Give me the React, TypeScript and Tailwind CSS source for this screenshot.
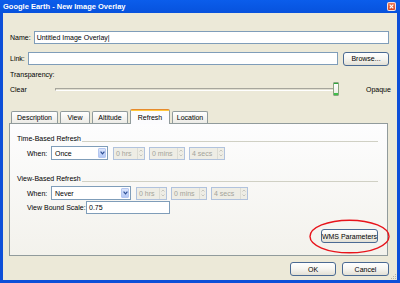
import React from "react";

function XpButton({ label, className = "" }: { label: string; className?: string }) {
  return (
    <div
      className={`flex h-[14px] items-center justify-center whitespace-nowrap rounded-[3px] border border-[#4a6a93] bg-gradient-to-b from-white via-[#f6f5f0] to-[#e2e0d5] text-[7px] leading-none text-black ${className}`}
    >
      {label}
    </div>
  );
}

function TextBox({ value = "", className = "" }: { value?: string; className?: string }) {
  return (
    <div className={`flex h-[13px] items-center whitespace-nowrap border border-[#7f9db9] bg-white px-[2px] text-[7px] leading-none ${className}`}>
      {value}
    </div>
  );
}

function Select({ value, className = "" }: { value: string; className?: string }) {
  return (
    <div className={`flex h-[14px] items-stretch border border-[#7f9db9] bg-white p-px ${className}`}>
      <span className="flex flex-1 items-center pl-[2px] text-[7px] leading-none">{value}</span>
      <span className="flex w-[8px] items-center justify-center rounded-[1px] border border-[#b5c7f0] bg-gradient-to-b from-[#dbe5fc] to-[#b3c8f5]">
        <svg width="5" height="4" viewBox="0 0 5 4">
          <path d="M0.6 0.7 L2.5 2.8 L4.4 0.7" stroke="#2b4d94" strokeWidth="1.2" fill="none" />
        </svg>
      </span>
    </div>
  );
}

function Spin({ value, className = "" }: { value: string; className?: string }) {
  return (
    <div className={`flex h-[13px] items-stretch border border-[#b0c2dd] bg-[#eeede5] ${className}`}>
      <span className="flex flex-1 items-center whitespace-nowrap pl-[2px] text-[7px] leading-none text-[#a3a39a]">{value}</span>
      <span className="flex w-[7px] flex-col items-center justify-center gap-[2px] border-l border-[#dcdcd4]">
        <svg width="4" height="3" viewBox="0 0 4 3">
          <path d="M0.5 2.5 L2 1 L3.5 2.5" stroke="#c2c2ba" strokeWidth="0.9" fill="none" />
        </svg>
        <svg width="4" height="3" viewBox="0 0 4 3">
          <path d="M0.5 0.5 L2 2 L3.5 0.5" stroke="#c2c2ba" strokeWidth="0.9" fill="none" />
        </svg>
      </span>
    </div>
  );
}

function GroupTitle({ title }: { title: string }) {
  return (
    <div className="flex h-[9px] items-end pr-[9px]">
      <span className="whitespace-nowrap text-[7px] leading-[9px]">{title}</span>
      <span className="mb-[1px] ml-px h-px flex-1 bg-[#d0d0c4]" />
    </div>
  );
}

function Tab({ label, active = false, className = "" }: { label: string; active?: boolean; className?: string }) {
  if (active) {
    return (
      <div className={`relative z-10 -mb-px flex h-[15px] items-center justify-center rounded-t-[2px] border border-b-0 border-[#919b9c] border-t-[#e68b2c] bg-[#fcfcfe] text-[7px] leading-none ${className}`}>
        <span className="absolute left-0 right-0 top-0 h-px bg-[#ffc73c]" />
        {label}
      </div>
    );
  }
  return (
    <div className={`flex h-[12px] items-center justify-center rounded-t-[2px] border border-b-0 border-[#919b9c] bg-gradient-to-b from-white to-[#ecebe6] text-[7px] leading-none ${className}`}>
      {label}
    </div>
  );
}

export default function App() {
  return (
    <div className="flex h-[283px] w-[400px] flex-col bg-[#0d4fd8] font-['Liberation_Sans',Arial,sans-serif] text-black">
      {/* title bar */}
      <div className="flex h-[13px] items-center justify-between bg-gradient-to-b from-[#0b5deb] to-[#0752dd] pl-[3px] pr-[4px]">
        <span className="text-[7.5px] font-bold leading-none text-white">Google Earth - New Image Overlay</span>
        <div className="flex h-[9px] w-[9px] items-center justify-center rounded-[2px] border border-white/80 bg-gradient-to-b from-[#ea7a5a] to-[#d5411c]">
          <svg width="5" height="5" viewBox="0 0 5 5">
            <path d="M0.7 0.7 L4.3 4.3 M4.3 0.7 L0.7 4.3" stroke="white" strokeWidth="1.2" />
          </svg>
        </div>
      </div>

      {/* body */}
      <div className="relative mx-[3px] mb-[3px] flex flex-1 flex-col bg-[#ece9d8] pl-[7px] pr-[8px] pt-[18px] text-[7px] leading-none">
        <div className="flex h-[13px] items-center gap-[3px]">
          <span>Name:</span>
          <TextBox value="Untitled Image Overlay|" className="flex-1" />
        </div>

        <div className="mt-[8px] flex h-[13px] items-center">
          <span>Link:</span>
          <TextBox className="ml-[3px] flex-1" />
          <XpButton label="Browse..." className="ml-[5px] w-[46px]" />
        </div>

        <div className="mt-[5px] leading-[9px]">Transparency:</div>

        <div className="mt-[3px] flex h-[14px] items-center">
          <span className="w-[45px]">Clear</span>
          <div className="relative flex h-[14px] flex-1 items-center">
            <div className="h-[3px] w-full border border-[#a7a69c] border-b-white border-r-white bg-[#e2e0d2]" />
            <div className="absolute right-0 top-0 h-[14px] w-[6px] rounded-[1px] border border-[#8aa580] bg-gradient-to-b from-white to-[#ecebe4]">
              <span className="absolute bottom-0 left-0 right-0 h-[2px] bg-[#3fbf4a]" />
              <span className="absolute left-0 right-0 top-0 h-px bg-[#2ea93c]" />
            </div>
          </div>
          <span className="ml-[27px] w-[23px]">Opaque</span>
        </div>

        {/* tabs */}
        <div className="ml-[1px] mt-[13px] flex items-end gap-[2px]">
          <Tab label="Description" className="w-[47px]" />
          <Tab label="View" className="w-[30px]" />
          <Tab label="Altitude" className="w-[36px]" />
          <Tab label="Refresh" active className="w-[40px]" />
          <Tab label="Location" className="w-[36px]" />
        </div>

        <div className="-ml-px mr-px flex h-[133px] flex-col border border-[#919b9c] bg-gradient-to-b from-[#fdfdfe] to-[#f3f2ec] pl-[7px] pt-[10px]">
          <GroupTitle title="Time-Based Refresh" />
          <div className="ml-[10px] mt-[3px] flex h-[14px] items-center">
            <span className="w-[24px]">When:</span>
            <Select value="Once" className="w-[57px]" />
            <Spin value="0 hrs" className="ml-[5px] w-[32px]" />
            <Spin value="0 mins" className="ml-[4px] w-[36px]" />
            <Spin value="4 secs" className="ml-[4px] w-[36px]" />
          </div>

          <div className="mt-[14px]">
            <GroupTitle title="View-Based Refresh" />
          </div>
          <div className="ml-[10px] mt-[3px] flex h-[14px] items-center">
            <span className="w-[24px]">When:</span>
            <Select value="Never" className="w-[80px]" />
            <Spin value="0 hrs" className="ml-[5px] w-[31px]" />
            <Spin value="0 mins" className="ml-[4px] w-[36px]" />
            <Spin value="4 secs" className="ml-[4px] w-[37px]" />
          </div>
          <div className="ml-[10px] mt-px flex h-[13px] items-center">
            <span className="w-[59px] whitespace-nowrap">View Bound Scale:</span>
            <TextBox value="0.75" className="w-[84px]" />
          </div>

          <div className="mr-[9px] mt-[15px] flex justify-end">
            <div className="relative">
              <XpButton label="WMS Parameters" className="w-[57px]" />
              <svg className="absolute -left-[12px] -top-[10px]" width="81" height="35" viewBox="0 0 81 35">
                <ellipse cx="40.5" cy="17.5" rx="39.5" ry="16.3" fill="none" stroke="#e8141b" strokeWidth="1.4" />
              </svg>
            </div>
          </div>
        </div>

        <div className="mt-[6px] flex justify-end gap-[6px]">
          <XpButton label="OK" className="w-[46px]" />
          <XpButton label="Cancel" className="w-[47px]" />
        </div>

        {/* resize grip */}
        <svg className="absolute bottom-0 right-0" width="7" height="7" viewBox="0 0 7 7">
          <rect x="5" y="1" width="1" height="1" fill="#b8b4a2" />
          <rect x="3" y="3" width="1" height="1" fill="#b8b4a2" />
          <rect x="5" y="3" width="1" height="1" fill="#b8b4a2" />
          <rect x="1" y="5" width="1" height="1" fill="#b8b4a2" />
          <rect x="3" y="5" width="1" height="1" fill="#b8b4a2" />
          <rect x="5" y="5" width="1" height="1" fill="#b8b4a2" />
        </svg>
      </div>
    </div>
  );
}
